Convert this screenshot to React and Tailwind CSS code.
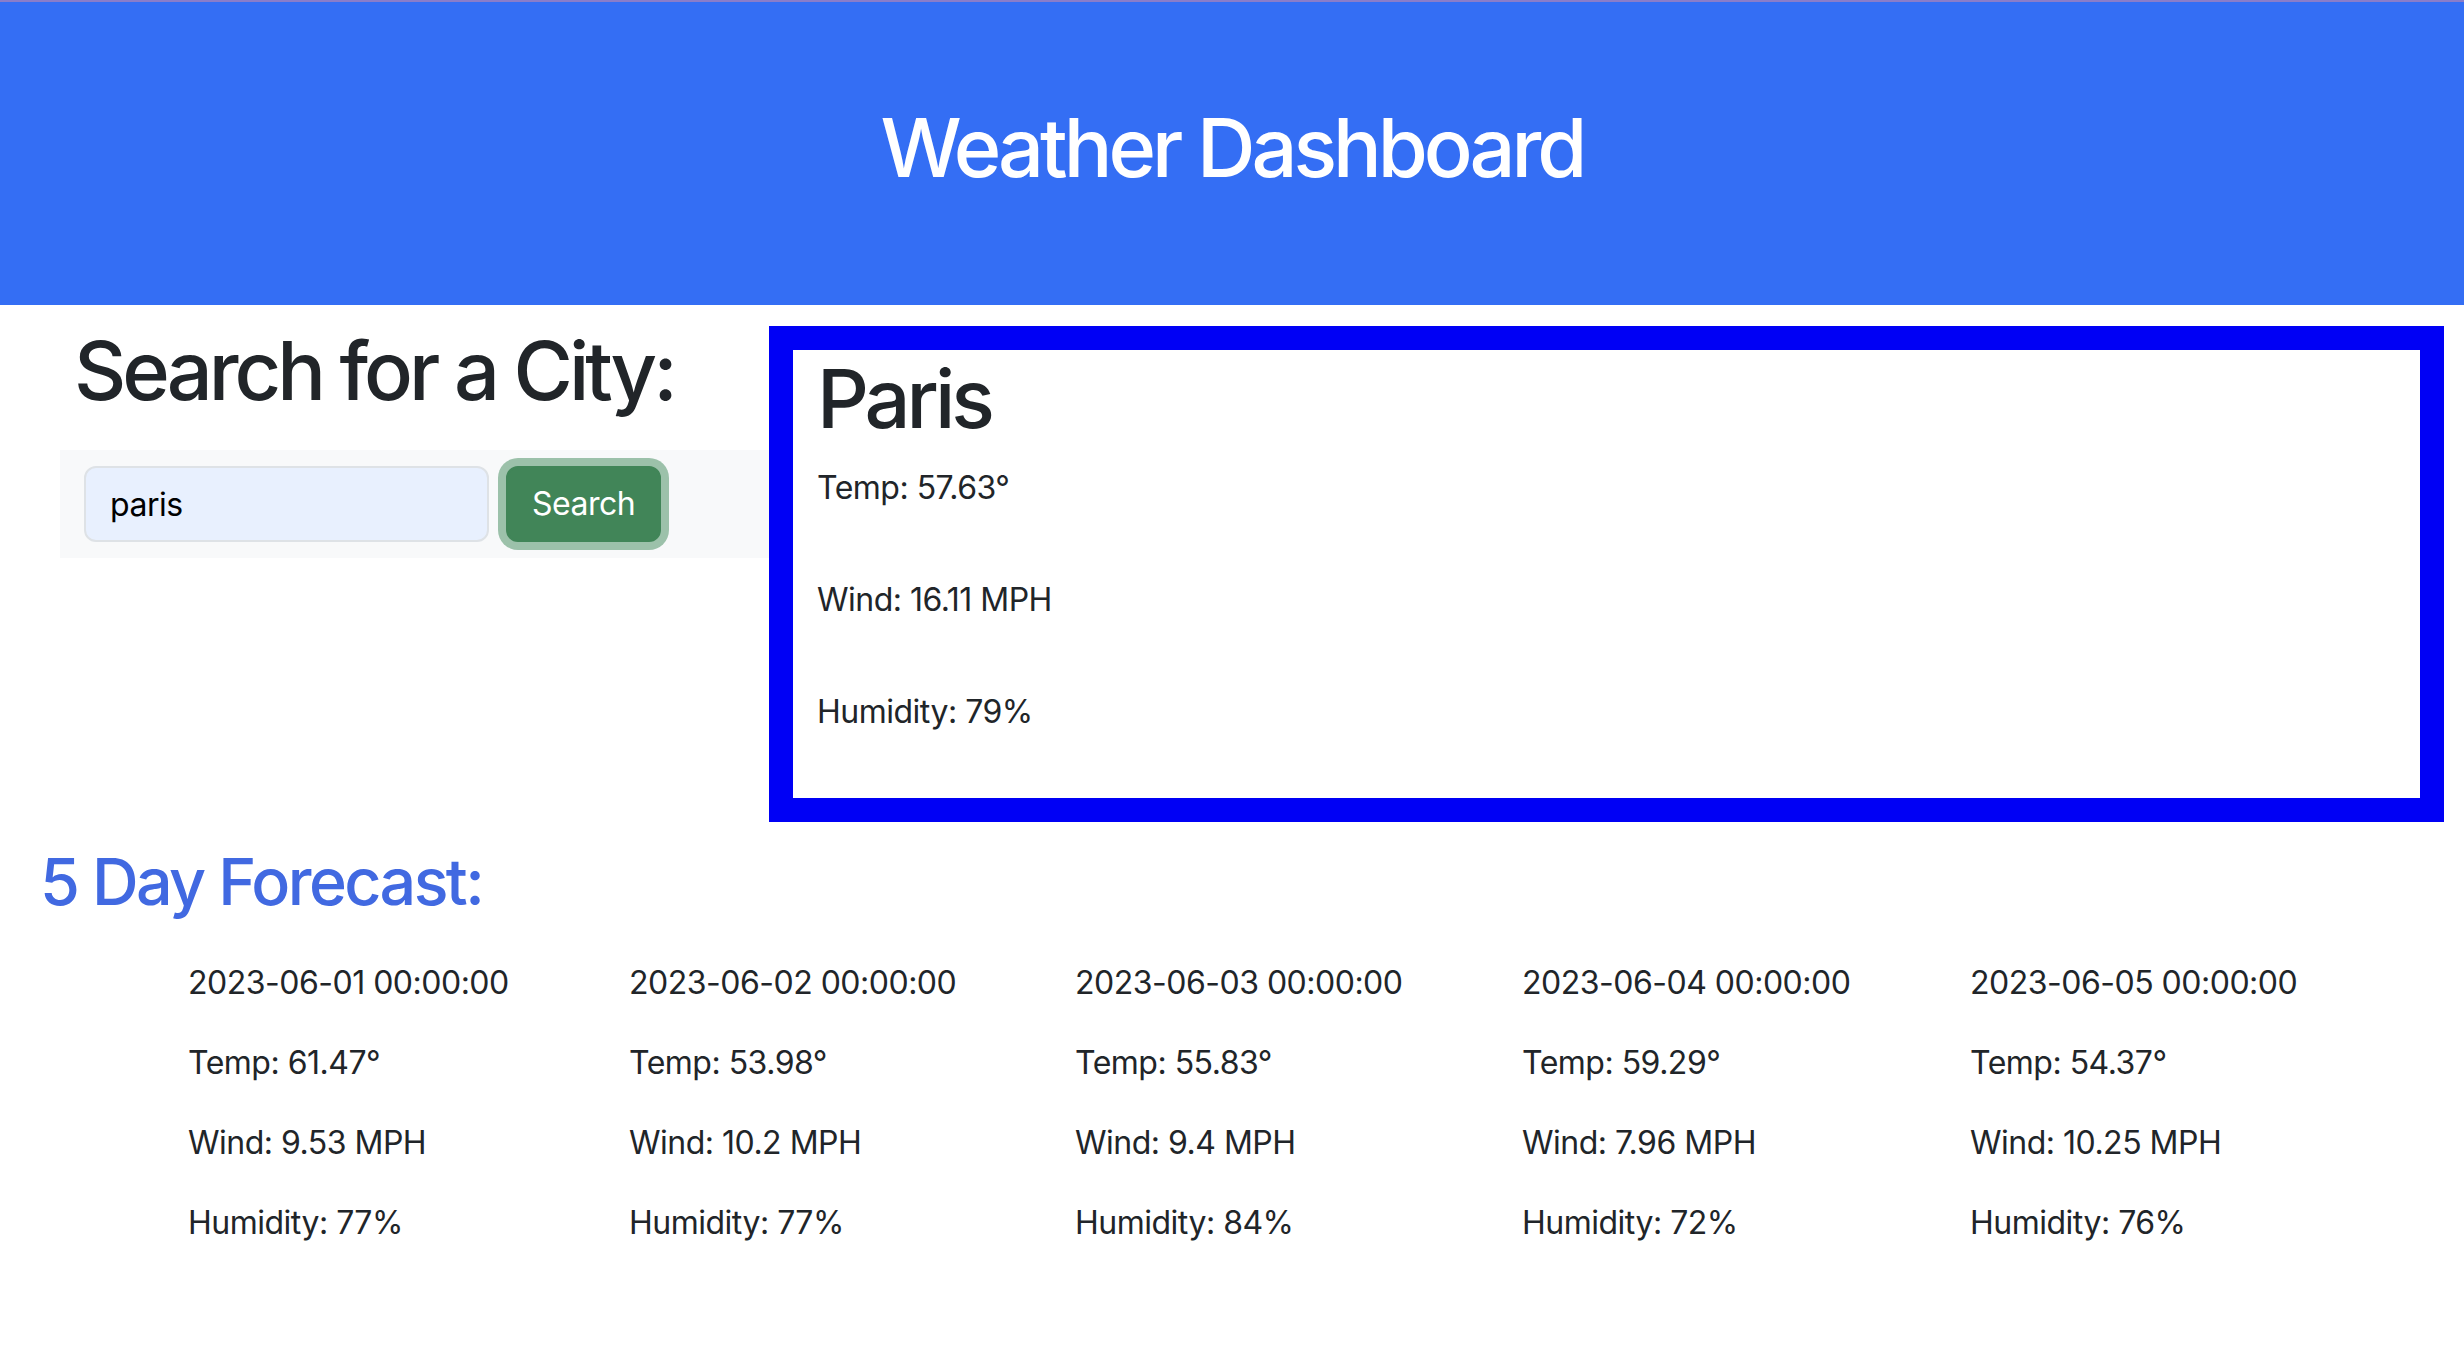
import { useState } from "react"

const current = {
  city: "Paris",
  temp: "57.63",
  wind: "16.11",
  humidity: "79",
}

const forecast = [
  { date: "2023-06-01 00:00:00", temp: "61.47", wind: "9.53", humidity: "77" },
  { date: "2023-06-02 00:00:00", temp: "53.98", wind: "10.2", humidity: "77" },
  { date: "2023-06-03 00:00:00", temp: "55.83", wind: "9.4", humidity: "84" },
  { date: "2023-06-04 00:00:00", temp: "59.29", wind: "7.96", humidity: "72" },
  { date: "2023-06-05 00:00:00", temp: "54.37", wind: "10.25", humidity: "76" },
]

function App() {
  const [city, setCity] = useState("paris")

  return (
    <div className="min-h-screen bg-white font-['Inter','Liberation_Sans',sans-serif] text-[#212529] tracking-[-0.5px]">
      <header className="h-[305px] bg-[#346ef4] border-t-2 border-[#8a7dc9] flex items-center justify-center pb-[10px]">
        <h1 className="text-[81px] leading-[1.2] font-medium tracking-[-4px] text-white">Weather Dashboard</h1>
      </header>

      <div className="flex">
        <div className="w-[709px] ml-[60px] pt-[18px] shrink-0">
          <h1 className="text-[81px] leading-[1.2] font-medium tracking-[-4px] pl-[14px]">Search for a City:</h1>
          <form
            className="mt-[30px] bg-[#f8f9fa] px-[24px] py-[16px] flex items-center gap-[17px]"
            onSubmit={(e) => e.preventDefault()}
          >
            <input
              type="text"
              value={city}
              onChange={(e) => setCity(e.target.value)}
              className="w-[405px] h-[76px] bg-[#e8f0fe] border-2 border-[#dee2e6] rounded-[12px] px-[24px] text-[32px] text-black outline-none"
            />
            <button
              type="submit"
              className="h-[76px] px-[24px] bg-[#418558] border-2 border-[#418558] rounded-[12px] text-[32px] text-white shadow-[0_0_0_8px_#9cc1aa]"
            >
              Search
            </button>
          </form>
        </div>

        <div className="mt-[21px] w-[1675px] border-[24px] border-[#0000f5] pl-[24px] pt-px">
          <h1 className="text-[81px] leading-[1.2] font-medium tracking-[-4px] mb-[16px]">{current.city}</h1>
          <p className="text-[32px] leading-[48px] mb-[64px]">Temp: {current.temp}°</p>
          <p className="text-[32px] leading-[48px] mb-[64px]">Wind: {current.wind} MPH</p>
          <p className="text-[32px] leading-[48px] mb-[62px]">Humidity: {current.humidity}%</p>
        </div>
      </div>

      <h2 className="mt-[21px] ml-[40px] text-[64.6px] leading-[1.2] font-medium tracking-[-2.6px] text-[#4169e1]">
        5 Day Forecast:
      </h2>

      <div className="mt-[38px] pl-[188px] grid grid-cols-[441px_446px_447px_448px_auto]">
        {forecast.map((day) => (
          <div key={day.date} className="flex flex-col gap-[32px] text-[32px] leading-[48px]">
            <p>{day.date}</p>
            <p>Temp: {day.temp}°</p>
            <p>Wind: {day.wind} MPH</p>
            <p>Humidity: {day.humidity}%</p>
          </div>
        ))}
      </div>
    </div>
  )
}

export default App
